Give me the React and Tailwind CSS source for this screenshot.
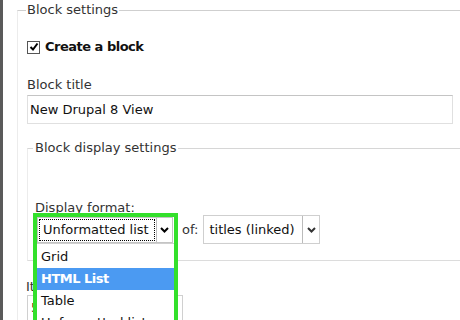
import React from "react";

const font = "font-['DejaVu_Sans',sans-serif]";

function Chevron({ className = "" }) {
  return (
    <svg width="9" height="6" viewBox="0 0 9 6" className={className}>
      <polyline points="1,1 4.5,4.5 8,1" fill="none" stroke="currentColor" strokeWidth="2" />
    </svg>
  );
}

function FormatSelect() {
  return (
    <div className="relative ml-[2px] mt-[2px] self-start w-[136px] h-[26px] bg-white border border-[#c4c4c4] flex">
      <div className="flex-1 m-[1px] border border-dotted border-black flex items-center pl-[3px] text-[#111] whitespace-nowrap">
        Unformatted list
      </div>
      <div className="w-[16px] border-l border-[#bbb] flex items-center justify-center text-black">
        <Chevron />
      </div>
      {/* green call-out with the open list */}
      <div className="absolute -left-[5px] -top-[5px] w-[145px] border-[4px] border-[#33e02b]">
        <div className="h-[26px]" />
        <div className="bg-white border-t border-[#cfcfcf] pt-[2px] text-[#111]">
          <div className="h-[22px] flex items-center pl-[4px]">Grid</div>
          <div className="h-[22px] flex items-center pl-[4px] bg-[#4b9af2] text-white font-bold tracking-[-0.5px]">
            HTML List
          </div>
          <div className="h-[22px] flex items-center pl-[4px]">Table</div>
          <div className="h-[22px] flex items-center pl-[4px] whitespace-nowrap">Unformatted list</div>
        </div>
      </div>
    </div>
  );
}

export default function App() {
  return (
    <div className={`${font} w-[460px] h-[320px] overflow-hidden bg-white flex text-[13px] text-[#222]`}>
      <div className="w-[3px] shrink-0 bg-[#5a5a5a]" />
      <div className="pl-[14px]">
        <fieldset className="mt-[1px] w-[460px] border border-[#ececec] border-t-[#cfcfcf] px-[8px] pb-[20px]">
          <legend className="px-[1px] leading-[18px] text-[#333]">Block settings</legend>

          <div className="mt-[18px] h-[20px] flex items-center gap-[5px] pl-[1px]">
            <div className="w-[13px] h-[13px] border border-[#555] bg-white flex items-center justify-center">
              <svg width="10" height="10" viewBox="0 0 10 10">
                <polyline points="1.5,5 4,7.5 8.5,1.5" fill="none" stroke="#000" strokeWidth="2" />
              </svg>
            </div>
            <span className="font-bold tracking-[-0.5px] text-[#111]">Create a block</span>
          </div>

          <div className="mt-[19px] leading-[18px] pl-[1px] text-[#333]">Block title</div>
          <div className="mt-[1px] ml-[1px] w-[426px] h-[29px] border border-[#e0e0e0] border-t-[#c4c4c4] flex items-center pl-[2px] text-[#111]">
            New Drupal 8 View
          </div>

          <fieldset className="mt-[15px] ml-[1px] w-[460px] border border-[#ececec] border-t-[#d6d6d6] border-b-[#dcdcdc] pl-[7px] pb-[16px]">
            <legend className="-ml-[2px] px-[2px] leading-[18px] text-[#333]">Block display settings</legend>
            <div className="mt-[43px] leading-[15px] text-[#333]">Display format:</div>
            <div className="h-[29px] flex items-center">
              <FormatSelect />
              <span className="ml-[9px] text-[#333]">of:</span>
              <div className="ml-[5px] w-[117px] h-[29px] border border-[#cfcfcf] flex">
                <div className="flex-1 flex items-center pl-[5px] text-[#111] whitespace-nowrap">titles (linked)</div>
                <div className="w-[17px] border-l border-[#bbb] flex items-center justify-center text-[#333]">
                  <Chevron />
                </div>
              </div>
            </div>
          </fieldset>

          <div className="mt-[17px] leading-[17px] text-[#333]">Items per block</div>
          <div className="ml-[1px] w-[156px] h-[26px] border border-[#d0d0d0] flex items-center pl-[3px] text-[#111]">5</div>
        </fieldset>
      </div>
    </div>
  );
}
